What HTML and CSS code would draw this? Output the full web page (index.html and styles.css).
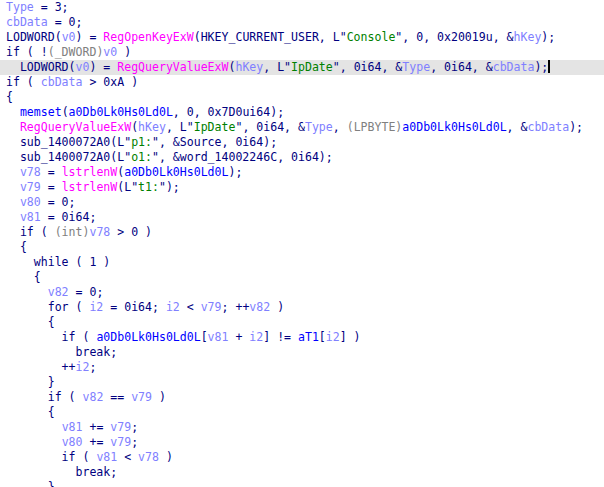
FILE: index.html
```html
<!DOCTYPE html>
<html>
<head>
<meta charset="utf-8">
<link rel="stylesheet" href="styles.css">
</head>
<body>
<div class="code">
<div class="ln"><span class="v">Type</span> = 3;</div>
<div class="ln"><span class="v">cbData</span> = 0;</div>
<div class="ln">LODWORD(<span class="v">v0</span>) = <span class="f">RegOpenKeyExW</span>(HKEY_CURRENT_USER, L"<span class="s">Console</span>", 0, 0x20019u, &amp;<span class="v">hKey</span>);</div>
<div class="ln">if ( !<span class="c">(_DWORD)</span><span class="v">v0</span> )</div>
<div class="ln hl">  LODWORD(<span class="v">v0</span>) = <span class="f">RegQueryValueExW</span>(<span class="v">hKey</span>, L"<span class="s">IpDate</span>", 0i64, &amp;<span class="v">Type</span>, 0i64, &amp;<span class="v">cbData</span>);<span class="cursor"></span></div>
<div class="ln">if ( <span class="v">cbData</span> &gt; 0xA )</div>
<div class="ln">{</div>
<div class="ln">  <span class="g">memset</span>(<span class="g">a0Db0Lk0Hs0Ld0L</span>, 0, 0x7D0ui64);</div>
<div class="ln">  <span class="f">RegQueryValueExW</span>(<span class="v">hKey</span>, L"<span class="s">IpDate</span>", 0i64, &amp;<span class="v">Type</span>, <span class="c">(LPBYTE)</span><span class="g">a0Db0Lk0Hs0Ld0L</span>, &amp;<span class="v">cbData</span>);</div>
<div class="ln">  sub_1400072A0(L"<span class="s">p1:</span>", &amp;Source, 0i64);</div>
<div class="ln">  sub_1400072A0(L"<span class="s">o1:</span>", &amp;word_14002246C, 0i64);</div>
<div class="ln">  <span class="v">v78</span> = <span class="f">lstrlenW</span>(<span class="g">a0Db0Lk0Hs0Ld0L</span>);</div>
<div class="ln">  <span class="v">v79</span> = <span class="f">lstrlenW</span>(L"<span class="s">t1:</span>");</div>
<div class="ln">  <span class="v">v80</span> = 0;</div>
<div class="ln">  <span class="v">v81</span> = 0i64;</div>
<div class="ln">  if ( <span class="c">(int)</span><span class="v">v78</span> &gt; 0 )</div>
<div class="ln">  {</div>
<div class="ln">    while ( 1 )</div>
<div class="ln">    {</div>
<div class="ln">      <span class="v">v82</span> = 0;</div>
<div class="ln">      for ( <span class="v">i2</span> = 0i64; <span class="v">i2</span> &lt; <span class="v">v79</span>; ++<span class="v">v82</span> )</div>
<div class="ln">      {</div>
<div class="ln">        if ( <span class="g">a0Db0Lk0Hs0Ld0L</span>[<span class="v">v81</span> + <span class="v">i2</span>] != <span class="g">aT1</span>[<span class="v">i2</span>] )</div>
<div class="ln">          break;</div>
<div class="ln">        ++<span class="v">i2</span>;</div>
<div class="ln">      }</div>
<div class="ln">      if ( <span class="v">v82</span> == <span class="v">v79</span> )</div>
<div class="ln">      {</div>
<div class="ln">        <span class="v">v81</span> += <span class="v">v79</span>;</div>
<div class="ln">        <span class="v">v80</span> += <span class="v">v79</span>;</div>
<div class="ln">        if ( <span class="v">v81</span> &lt; <span class="v">v78</span> )</div>
<div class="ln">          break;</div>
<div class="ln">      }</div>
</div>
</body>
</html>
```
FILE: styles.css
```css
html, body {
  margin: 0;
  padding: 0;
  background: #ffffff;
  overflow: hidden;
  width: 604px;
  height: 487px;
}
.code {
  font-family: "DejaVu Sans Mono", "Liberation Mono", monospace;
  font-size: 11.55px;
  line-height: 15px;
  color: #000080;
}
.ln {
  white-space: pre;
  height: 15px;
  padding-left: 6px;
}
.hl {
  background: #e4e4e4;
}
.v { color: #8080ff; }
.f { color: #ff00ff; }
.s { color: #008000; }
.g { color: #0000ff; }
.c { color: #808080; }
.cursor {
  display: inline-block;
  width: 2px;
  height: 13px;
  background: #000000;
  vertical-align: -2px;
}
```
